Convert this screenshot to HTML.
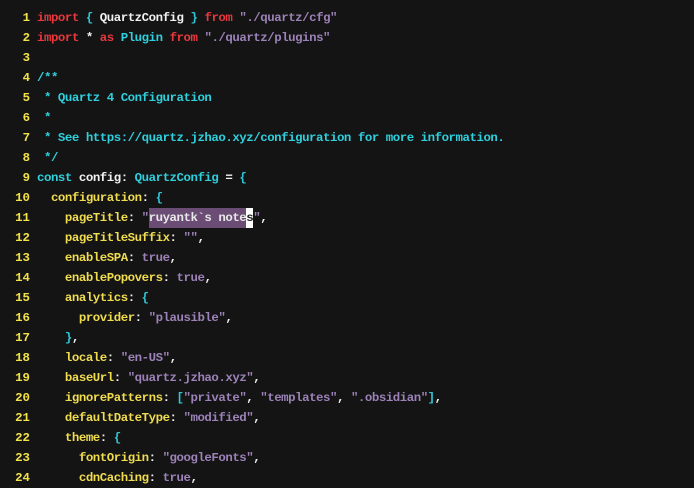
<!DOCTYPE html>
<html><head><meta charset="utf-8"><style>
body{margin:0;background:#141414;width:694px;height:477px;overflow:hidden}
.code{padding-top:8px;font-family:"Liberation Mono",monospace;font-weight:bold;font-size:12.4px;letter-spacing:-0.46px;line-height:20px;color:#f2f2f2}
.l{height:20px;white-space:pre}
.n{display:inline-block;width:30px;text-align:right;color:#f2e24a;margin-right:7px;letter-spacing:0}
.k{color:#e8383d}.c{color:#2fd0dd}.s{color:#9c82b8}.p{color:#f0dc50}.b{color:#2fc8d8}.t{color:#9c82b8}
.sel{background:#6a4c74;color:#e8e8e8;padding:3px 0}.cur{background:#fff;color:#222;padding:3px 0}
</style></head><body><div class="code">
<div class="l"><span class="n">1</span><span class="k">import</span> <span class="b">{</span> QuartzConfig <span class="b">}</span> <span class="k">from</span> <span class="s">"./quartz/cfg"</span></div>
<div class="l"><span class="n">2</span><span class="k">import</span> * <span class="k">as</span> <span class="c">Plugin</span> <span class="k">from</span> <span class="s">"./quartz/plugins"</span></div>
<div class="l"><span class="n">3</span></div>
<div class="l"><span class="n">4</span><span class="c">/**</span></div>
<div class="l"><span class="n">5</span><span class="c"> * Quartz 4 Configuration</span></div>
<div class="l"><span class="n">6</span><span class="c"> *</span></div>
<div class="l"><span class="n">7</span><span class="c"> * See https://quartz.jzhao.xyz/configuration for more information.</span></div>
<div class="l"><span class="n">8</span><span class="c"> */</span></div>
<div class="l"><span class="n">9</span><span class="c">const</span> config: <span class="c">QuartzConfig</span> = <span class="b">{</span></div>
<div class="l"><span class="n">10</span>  <span class="p">configuration</span>: <span class="b">{</span></div>
<div class="l"><span class="n">11</span>    <span class="p">pageTitle</span>: <span class="s">"</span><span class="sel">ruyantk`s note</span><span class="cur">s</span><span class="s">"</span>,</div>
<div class="l"><span class="n">12</span>    <span class="p">pageTitleSuffix</span>: <span class="s">""</span>,</div>
<div class="l"><span class="n">13</span>    <span class="p">enableSPA</span>: <span class="t">true</span>,</div>
<div class="l"><span class="n">14</span>    <span class="p">enablePopovers</span>: <span class="t">true</span>,</div>
<div class="l"><span class="n">15</span>    <span class="p">analytics</span>: <span class="b">{</span></div>
<div class="l"><span class="n">16</span>      <span class="p">provider</span>: <span class="s">"plausible"</span>,</div>
<div class="l"><span class="n">17</span>    <span class="b">}</span>,</div>
<div class="l"><span class="n">18</span>    <span class="p">locale</span>: <span class="s">"en-US"</span>,</div>
<div class="l"><span class="n">19</span>    <span class="p">baseUrl</span>: <span class="s">"quartz.jzhao.xyz"</span>,</div>
<div class="l"><span class="n">20</span>    <span class="p">ignorePatterns</span>: <span class="b">[</span><span class="s">"private"</span>, <span class="s">"templates"</span>, <span class="s">".obsidian"</span><span class="b">]</span>,</div>
<div class="l"><span class="n">21</span>    <span class="p">defaultDateType</span>: <span class="s">"modified"</span>,</div>
<div class="l"><span class="n">22</span>    <span class="p">theme</span>: <span class="b">{</span></div>
<div class="l"><span class="n">23</span>      <span class="p">fontOrigin</span>: <span class="s">"googleFonts"</span>,</div>
<div class="l"><span class="n">24</span>      <span class="p">cdnCaching</span>: <span class="t">true</span>,</div>
</div></body></html>
